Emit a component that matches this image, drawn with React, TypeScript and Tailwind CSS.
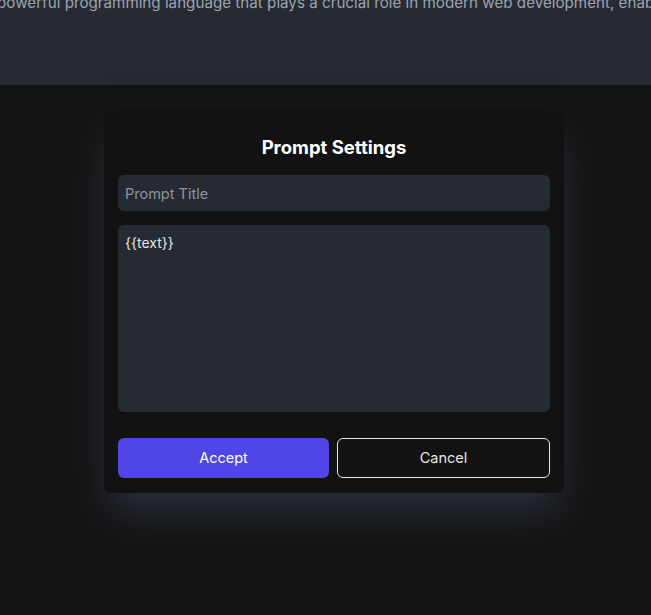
import { useState } from 'react';

export default function App() {
  const [title, setTitle] = useState('');
  const [body, setBody] = useState('{{text}}');

  return (
    <div className="flex h-[615px] w-[651px] flex-col overflow-hidden bg-[#141414] font-['Inter',sans-serif]">
      <div className="h-[85px] shrink-0 overflow-hidden bg-[#272a33]">
        <p className="-ml-[3px] -mt-[9px] whitespace-nowrap text-[15.2px] leading-6 text-[#9ca3af]">
          powerful programming language that plays a crucial role in modern web development, enabling developers to build
        </p>
      </div>

      <div className="flex pl-[104px] pt-[25px]">
        <div className="flex w-[460px] flex-col rounded-md bg-[#121212] px-[14px] pb-[15px] pt-[23px] shadow-[0_22px_40px_-6px_rgba(48,55,70,0.85)]">
          <h2 className="text-center text-[18.5px] font-bold leading-7 text-white">Prompt Settings</h2>
          <input
            value={title}
            onChange={(e) => setTitle(e.target.value)}
            placeholder="Prompt Title"
            className="mt-[14px] h-9 rounded-md bg-[#262a33] px-[7px] text-[14.5px] text-gray-200 outline-none placeholder:text-[#8f939c]"
          />
          <textarea
            value={body}
            onChange={(e) => setBody(e.target.value)}
            className="mt-[14px] h-[187px] resize-none rounded-md bg-[#262a33] px-[7px] py-[6px] text-[14px] leading-6 text-[#e5e7eb] outline-none"
          />
          <div className="mt-[26px] flex gap-2">
            <button type="button" className="h-10 flex-1 rounded-md bg-[#4f46e5] text-[14.5px] text-white">
              Accept
            </button>
            <button type="button" className="h-10 flex-1 rounded-md border border-[#e5e5e5] text-[14.5px] text-[#e5e5e5]">
              Cancel
            </button>
          </div>
        </div>
      </div>
    </div>
  );
}
